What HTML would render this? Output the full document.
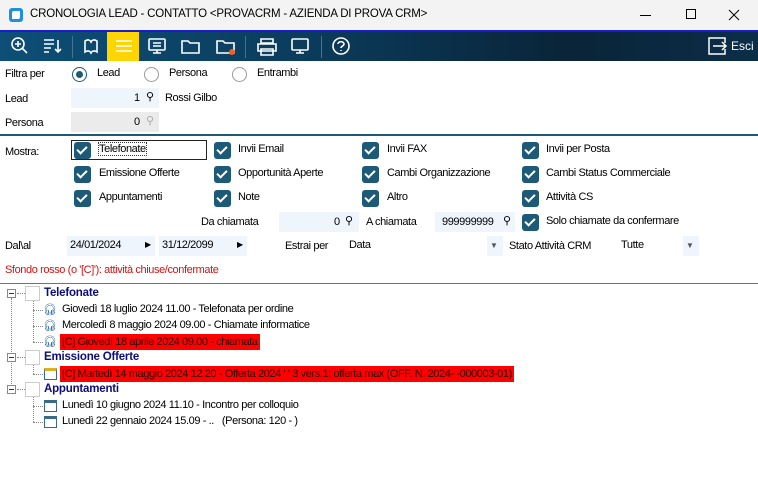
<!DOCTYPE html>
<html><head><meta charset="utf-8"><style>
*{margin:0;padding:0;box-sizing:border-box}
body{width:758px;height:486px;background:#fff;font-family:"Liberation Sans",sans-serif;font-size:11px;letter-spacing:-0.4px;color:#000;position:relative;overflow:hidden}
.a{position:absolute;white-space:nowrap}
.title{left:0;top:0;width:758px;height:30px;background:#f3f3f3}
.tb{left:0;top:30px;width:758px;height:31px;border-top:2px solid #1a1ad0;background:linear-gradient(90deg,#0d4f76 0%,#0b3c5c 40%,#0a2438 75%,#0b2e48 100%)}
.sep{width:1px;height:22px;top:5px;background:#3f7494}
.inp{background:#eef5fc;height:20px}
.cb{width:17px;height:17px;background:#1c5a78;border-radius:3px}
.cb::after{content:"";position:absolute;left:5px;top:2px;width:4px;height:8px;border:solid #fff;border-width:0 2px 2px 0;transform:rotate(45deg)}
.rad{width:15px;height:15px;border:1px solid #999;border-radius:50%;background:#fff}
.tree{font-size:11px;letter-spacing:-0.4px}
.red{background:#ff0000;color:#2a0000;padding:0 2px}
.hd{color:#0d0d7a;font-weight:bold;font-size:11.5px;letter-spacing:-0.2px}
.box{width:15px;height:15px;border:1px solid #ccc;background:#fff}
.pm{width:9px;height:9px;border:1px solid #888;background:#fff}
.pm::after{content:"";position:absolute;left:1px;top:3px;width:5px;height:1px;background:#333}
.dv{border-left:1px dotted #888}
.dh{border-top:1px dotted #888;height:1px}
</style></head><body>
<div class="a title"></div>
<div class="a" style="left:9px;top:8px;width:14px;height:14px;background:#1e90e0;border-radius:3px"></div>
<div class="a" style="left:12px;top:11px;width:8px;height:8px;background:#fff;border-radius:2px 0 2px 0"></div>
<div class="a" style="left:30px;top:8px;font-size:11.5px;letter-spacing:-0.2px">CRONOLOGIA LEAD - CONTATTO &lt;PROVACRM - AZIENDA DI PROVA CRM&gt;</div>
<div class="a" style="left:640px;top:15px;width:11px;height:1px;background:#000"></div>
<div class="a" style="left:686px;top:9px;width:10px;height:10px;border:1px solid #000"></div>
<svg class="a" style="left:728px;top:9px" width="12" height="12" viewBox="0 0 12 12" stroke="#000" stroke-width="1"><path d="M1 1l10 10M11 1L1 11"/></svg>

<div class="a tb"></div>
<div class="a" style="left:107px;top:32px;width:32px;height:29px;background:#ffd500"></div>
<svg class="a" style="left:0;top:32px" width="380" height="29" viewBox="0 0 380 29" fill="none" stroke="#fff" stroke-width="1.6">
<circle cx="18" cy="12" r="6"/><path d="M22 16l5 5M15 12h6M18 9v6"/>
<path d="M44 8h10M44 12h10M44 16h7M44 20h5M58 8v12M55 17l3 3 3-3"/>
<path d="M85 9c3-2 5-1 6 1c1-2 3-3 6-1v11c-3-2-5-1-6 1c-1-2-3-3-6-1z"/>
<path d="M116 9h16M116 14h16M116 19h16" stroke="#fff"/>
<rect x="149" y="7" width="16" height="11" rx="1"/><path d="M153 11h8M153 14h8M157 18v3M153 21h8"/>
<path d="M182 9h6l2 2h9v10h-17z"/>
<path d="M217 9h6l2 2h9v10h-17z"/><circle cx="232" cy="20" r="3" fill="#f06020" stroke="none"/>
<path d="M261 11h12v-4h-12zM258 12h18v7h-18zM261 17h12v6h-12z"/>
<rect x="292" y="7" width="16" height="11" rx="1"/><path d="M300 18v3M296 21h8"/>
<circle cx="341" cy="14" r="8"/><path d="M338 12c0-3 6-3 6 0c0 2-3 2-3 4M341 18v1"/>
</svg>
<div class="a sep" style="left:72px;top:36px"></div>
<div class="a sep" style="left:245px;top:36px"></div>
<div class="a sep" style="left:321px;top:36px"></div>
<svg class="a" style="left:707px;top:36px" width="22" height="20" viewBox="0 0 22 20" fill="none" stroke="#fff" stroke-width="1.5"><path d="M8 2h-6v16h16v-5M18 7v-5h-10"/><path d="M6 10h13M15 6l4 4-4 4"/></svg>
<div class="a" style="left:731px;top:39px;color:#fff;font-size:12px;letter-spacing:0">Esci</div>

<div class="a" style="left:5px;top:68px">Filtra per</div>
<div class="a rad" style="left:72px;top:67px;border-color:#1c5a78"></div><div class="a" style="left:76px;top:71px;width:7px;height:7px;border-radius:50%;background:#1c5a78"></div>
<div class="a" style="left:97px;top:67px">Lead</div>
<div class="a rad" style="left:144px;top:67px"></div><div class="a" style="left:169px;top:67px">Persona</div>
<div class="a rad" style="left:232px;top:67px"></div><div class="a" style="left:257px;top:67px">Entrambi</div>

<div class="a" style="left:5px;top:93px">Lead</div>
<div class="a inp" style="left:71px;top:88px;width:88px"></div>
<div class="a" style="left:134px;top:92px">1</div><div class="a" style="left:146px;top:90px">⚲</div>
<div class="a" style="left:165px;top:92px">Rossi Gilbo</div>
<div class="a" style="left:5px;top:117px">Persona</div>
<div class="a" style="left:71px;top:112px;width:88px;height:20px;background:#ebebeb"></div>
<div class="a" style="left:134px;top:116px">0</div><div class="a" style="left:146px;top:114px;color:#aaa">⚲</div>
<div class="a" style="left:0;top:134px;width:758px;height:2px;background:#1e5a73"></div>

<div class="a" style="left:5px;top:146px">Mostra:</div>
<div class="a" style="left:71px;top:140px;width:136px;height:20px;border:1px solid #222"></div>
<div class="a cb" style="left:74px;top:142px"></div><div class="a" style="left:99px;top:143px;outline:1px dotted #333">Telefonate</div>
<div class="a cb" style="left:214px;top:142px"></div><div class="a" style="left:238px;top:143px">Invii Email</div>
<div class="a cb" style="left:362px;top:142px"></div><div class="a" style="left:387px;top:143px">Invii FAX</div>
<div class="a cb" style="left:522px;top:142px"></div><div class="a" style="left:546px;top:143px">Invii per Posta</div>
<div class="a cb" style="left:74px;top:166px"></div><div class="a" style="left:99px;top:167px">Emissione Offerte</div>
<div class="a cb" style="left:214px;top:166px"></div><div class="a" style="left:238px;top:167px">Opportunità Aperte</div>
<div class="a cb" style="left:362px;top:166px"></div><div class="a" style="left:387px;top:167px">Cambi Organizzazione</div>
<div class="a cb" style="left:522px;top:166px"></div><div class="a" style="left:546px;top:167px">Cambi Status Commerciale</div>
<div class="a cb" style="left:74px;top:190px"></div><div class="a" style="left:99px;top:191px">Appuntamenti</div>
<div class="a cb" style="left:214px;top:190px"></div><div class="a" style="left:238px;top:191px">Note</div>
<div class="a cb" style="left:362px;top:190px"></div><div class="a" style="left:387px;top:191px">Altro</div>
<div class="a cb" style="left:522px;top:190px"></div><div class="a" style="left:546px;top:191px">Attività CS</div>

<div class="a" style="left:201px;top:216px">Da chiamata</div>
<div class="a inp" style="left:279px;top:212px;width:80px"></div>
<div class="a" style="left:334px;top:216px">0</div><div class="a" style="left:345px;top:214px">⚲</div>
<div class="a" style="left:366px;top:216px">A chiamata</div>
<div class="a inp" style="left:435px;top:212px;width:80px"></div>
<div class="a" style="left:442px;top:216px">999999999</div><div class="a" style="left:503px;top:214px">⚲</div>
<div class="a cb" style="left:522px;top:214px"></div><div class="a" style="left:546px;top:215px">Solo chiamate da confermare</div>

<div class="a" style="left:5px;top:240px">Dal\al</div>
<div class="a inp" style="left:67px;top:236px;width:88px"></div>
<div class="a" style="left:70px;top:239px">24/01/2024</div><div class="a" style="left:145px;top:240px;font-size:8px">▶</div>
<div class="a inp" style="left:159px;top:236px;width:88px"></div>
<div class="a" style="left:162px;top:239px">31/12/2099</div><div class="a" style="left:237px;top:240px;font-size:8px">▶</div>
<div class="a" style="left:285px;top:240px">Estrai per</div>
<div class="a" style="left:349px;top:239px">Data</div>
<div class="a inp" style="left:487px;top:236px;width:16px"></div><div class="a" style="left:490px;top:241px;font-size:8px;color:#555">▼</div>
<div class="a" style="left:509px;top:240px">Stato Attività CRM</div>
<div class="a" style="left:621px;top:239px">Tutte</div>
<div class="a inp" style="left:683px;top:236px;width:16px"></div><div class="a" style="left:686px;top:241px;font-size:8px;color:#555">▼</div>
<div class="a" style="left:5px;top:264px;color:#d81010">Sfondo rosso (o '[C]'): attività chiuse/confermate</div>
<div class="a" style="left:0;top:283px;width:758px;height:1px;background:#5a7a8a"></div>

<div class="tree">
<div class="a dv" style="left:11px;top:298px;height:96px"></div>
<div class="a dv" style="left:33px;top:301px;height:41px"></div>
<div class="a dv" style="left:33px;top:365px;height:9px"></div>
<div class="a dv" style="left:33px;top:397px;height:25px"></div>

<div class="a pm" style="left:7px;top:289px"></div><div class="a dh" style="left:17px;top:293px;width:8px"></div><div class="a box" style="left:25px;top:286px"></div>
<div class="a hd" style="left:44px;top:287px">Telefonate</div>
<div class="a dh" style="left:33px;top:310px;width:10px"></div><div class="a" style="left:43px;top:303px;color:#2a6a9a">🎧︎</div><div class="a" style="left:62px;top:303px">Giovedì 18 luglio 2024 11.00 - Telefonata per ordine</div>
<div class="a dh" style="left:33px;top:326px;width:10px"></div><div class="a" style="left:43px;top:319px;color:#2a6a9a">🎧︎</div><div class="a" style="left:62px;top:319px">Mercoledì 8 maggio 2024 09.00 - Chiamate informatice</div>
<div class="a dh" style="left:33px;top:342px;width:10px"></div><div class="a" style="left:43px;top:335px;color:#2a6a9a">🎧︎</div><div class="a red" style="left:60px;top:334px;height:16px;line-height:16px">[C] Giovedì 18 aprile 2024 09.00 - chiamata</div>

<div class="a pm" style="left:7px;top:353px"></div><div class="a dh" style="left:17px;top:357px;width:8px"></div><div class="a box" style="left:25px;top:350px"></div>
<div class="a hd" style="left:44px;top:351px">Emissione Offerte</div>
<div class="a dh" style="left:33px;top:374px;width:10px"></div><div class="a" style="left:44px;top:368px;width:13px;height:12px;border:1px solid #3a6a8a;border-top:3px solid #e0b020"></div><div class="a red" style="left:60px;top:366px;height:16px;line-height:16px">[C] Martedì 14 maggio 2024 12.20 - Offerta 2024 ' ' 3 vers.1: offerta max (OFF. N. 2024- -000003-01)</div>

<div class="a pm" style="left:7px;top:385px"></div><div class="a dh" style="left:17px;top:389px;width:8px"></div><div class="a box" style="left:25px;top:382px"></div>
<div class="a hd" style="left:44px;top:383px">Appuntamenti</div>
<div class="a dh" style="left:33px;top:406px;width:10px"></div><div class="a" style="left:44px;top:400px;width:13px;height:12px;border:1px solid #3a6a8a;border-top:3px solid #3a6a8a"></div><div class="a" style="left:62px;top:399px">Lunedì 10 giugno 2024 11.10 - Incontro per colloquio</div>
<div class="a dh" style="left:33px;top:422px;width:10px"></div><div class="a" style="left:44px;top:416px;width:13px;height:12px;border:1px solid #3a6a8a;border-top:3px solid #3a6a8a"></div><div class="a" style="left:62px;top:415px">Lunedì 22 gennaio 2024 15.09 - ..&nbsp;&nbsp;&nbsp;(Persona: 120 - )</div>
</div>
</body></html>
